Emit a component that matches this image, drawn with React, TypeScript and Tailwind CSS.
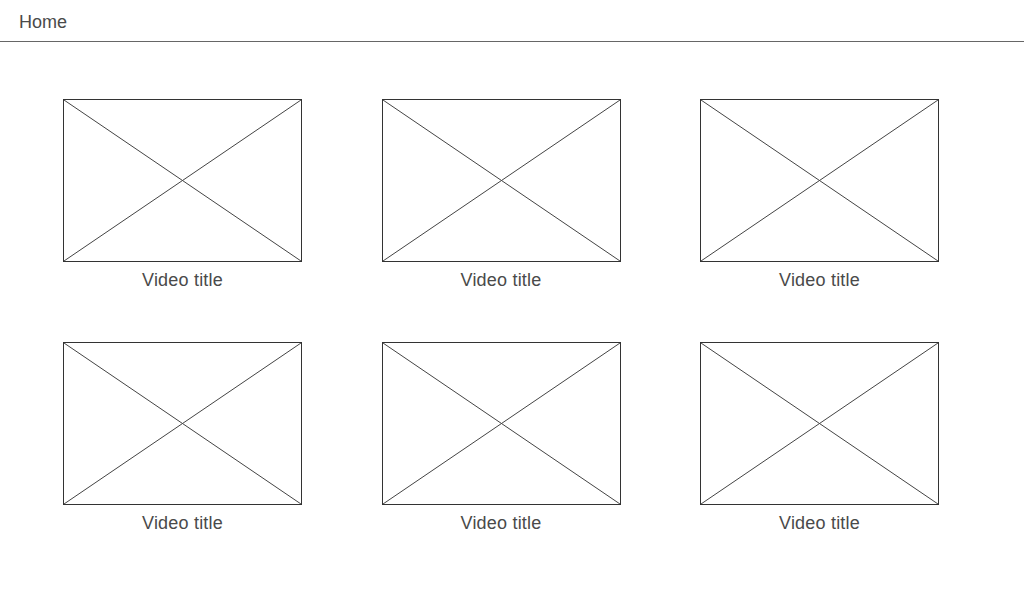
const videos = Array.from({ length: 6 }, (_, i) => ({ id: i, title: "Video title" }));

function Thumb() {
  return (
    <div className="h-[163px] w-[239px] border border-[#333] bg-white">
      <svg className="block h-full w-full" viewBox="0 0 100 100" preserveAspectRatio="none">
        <line x1="0" y1="0" x2="100" y2="100" stroke="#444" strokeWidth="1" vectorEffect="non-scaling-stroke" />
        <line x1="100" y1="0" x2="0" y2="100" stroke="#444" strokeWidth="1" vectorEffect="non-scaling-stroke" />
      </svg>
    </div>
  );
}

export default function App() {
  return (
    <div className="min-h-screen w-full bg-white text-[#4a4a4a] font-['Liberation_Sans',Arial,sans-serif]">
      <header className="h-[42px] border-b border-[#666] px-[19px] pt-[10px] text-[18px] leading-[24px]">
        Home
      </header>
      <main className="pl-[63px] pt-[57px]">
        <div className="grid grid-cols-[239px_239px_239px] gap-x-[79.5px] gap-y-[48px]">
          {videos.map((v) => (
            <div key={v.id} className="flex flex-col items-center">
              <Thumb />
              <div className="mt-[4px] text-[18px] leading-[28px] tracking-[0.2px]">{v.title}</div>
            </div>
          ))}
        </div>
      </main>
    </div>
  );
}
